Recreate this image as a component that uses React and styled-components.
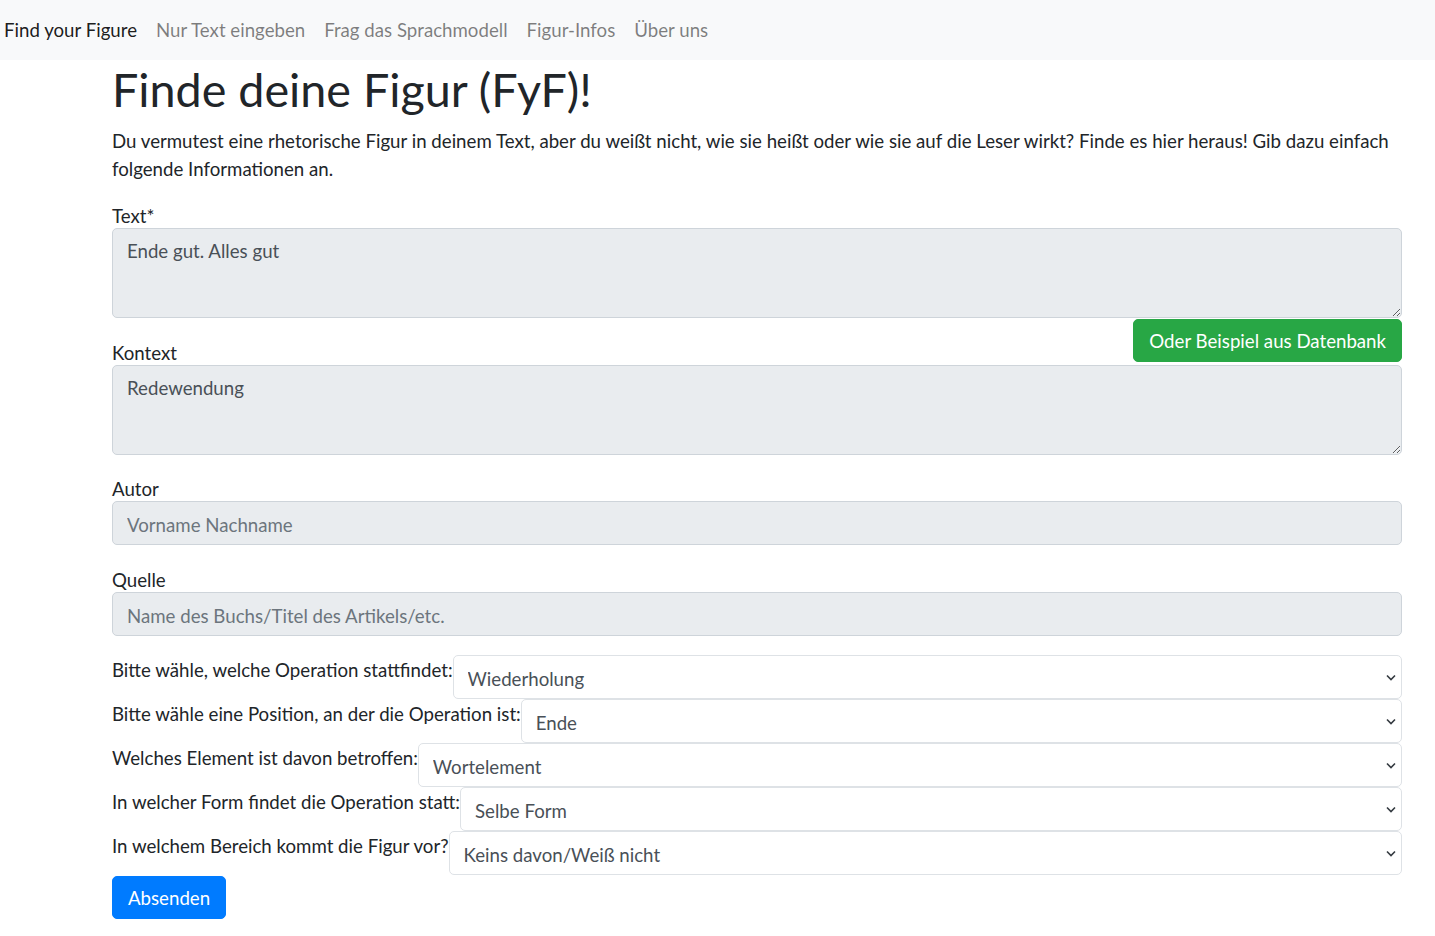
import React from "react";
import styled, { createGlobalStyle } from "styled-components";

const Global = createGlobalStyle`
  html, body { margin: 0; padding: 0; background: #fff; }
  body {
    font-family: Lato, "Liberation Sans", sans-serif;
    font-size: 18.67px;
    line-height: 1.5;
    color: #212529;
  }
  * { box-sizing: border-box; }
`;

const Navbar = styled.nav`
  height: 60px;
  background: #f8f9fa;
  display: flex;
  align-items: center;
  padding-left: 4px;
  gap: 19px;
`;

const NavLink = styled.a`
  font-size: 18.67px;
  color: ${(p) => (p.$brand ? "rgba(0,0,0,0.9)" : "rgba(0,0,0,0.5)")};
  text-decoration: none;
  cursor: pointer;
`;

const Main = styled.main`
  padding: 0 33px 40px 112px;
`;

const Title = styled.h1`
  font-size: 46.7px;
  font-weight: 400;
  line-height: 56px;
  margin: 1px 0 10px;
`;

const Intro = styled.p`
  margin: 0 0 21px;
  line-height: 28px;
`;

const Group = styled.div`
  margin-bottom: ${(p) => p.$mb || 0}px;
`;

const Label = styled.label`
  display: block;
  line-height: 24px;
`;

const LabelRow = styled.div`
  display: flex;
  justify-content: space-between;
  align-items: flex-end;
  margin-top: 1px;
`;

const Button = styled.button`
  font-family: inherit;
  font-size: 18.67px;
  line-height: 28px;
  color: #fff;
  background: ${(p) => p.$bg};
  border: 1px solid ${(p) => p.$bg};
  border-radius: 5px;
  padding: 7px 15px 6px;
  height: 43px;
  cursor: pointer;
`;

const ExampleButton = styled(Button)`
  margin-bottom: 3px;
`;

const TextArea = styled.textarea`
  display: block;
  width: 100%;
  height: ${(p) => p.$h}px;
  font-family: inherit;
  font-size: 18.67px;
  line-height: 28px;
  color: #495057;
  background: #e9ecef;
  border: 1px solid #ced4da;
  border-radius: 5px;
  padding: 8px 14px 6px;
  resize: vertical;
  outline: none;
`;

const TextInput = styled.input`
  display: block;
  width: 100%;
  height: 44px;
  font-family: inherit;
  font-size: 18.67px;
  color: #495057;
  background: #e9ecef;
  border: 1px solid #ced4da;
  border-radius: 5px;
  padding: 9px 14px 5px;
  outline: none;
  &::placeholder { color: #6c757d; }
`;

const SelectList = styled.div`
  margin-top: 19px;
  display: flex;
  flex-direction: column;
`;

const SelectRow = styled.div`
  display: flex;
  align-items: flex-start;
`;

const InlineLabel = styled.label`
  line-height: 28px;
  padding-top: 1px;
  white-space: nowrap;
`;

const SelectWrap = styled.div`
  position: relative;
  flex: 1;
`;

const Select = styled.select`
  display: block;
  width: 100%;
  height: 44px;
  appearance: none;
  font-family: inherit;
  font-size: 18.67px;
  color: #495057;
  background: #fff;
  border: 1px solid #dee2e6;
  border-radius: 5px;
  padding: 8px 40px 4px 14px;
  outline: none;
`;

const Chevron = styled.svg`
  position: absolute;
  right: 5px;
  top: 17px;
  pointer-events: none;
`;

const SubmitRow = styled.div`
  margin-top: 1px;
`;

const selects = [
  { label: "Bitte wähle, welche Operation stattfindet:", value: "Wiederholung" },
  { label: "Bitte wähle eine Position, an der die Operation ist:", value: "Ende" },
  { label: "Welches Element ist davon betroffen:", value: "Wortelement" },
  { label: "In welcher Form findet die Operation statt:", value: "Selbe Form" },
  { label: "In welchem Bereich kommt die Figur vor?", value: "Keins davon/Weiß nicht" },
];

export default function App() {
  return (
    <>
      <Global />
      <Navbar>
        <NavLink $brand>Find your Figure</NavLink>
        <NavLink>Nur Text eingeben</NavLink>
        <NavLink>Frag das Sprachmodell</NavLink>
        <NavLink>Figur-Infos</NavLink>
        <NavLink>Über uns</NavLink>
      </Navbar>
      <Main>
        <Title>Finde deine Figur (FyF)!</Title>
        <Intro>
          Du vermutest eine rhetorische Figur in deinem Text, aber du weißt nicht, wie sie heißt oder wie sie auf die
          Leser wirkt? Finde es hier heraus! Gib dazu einfach folgende Informationen an.
        </Intro>
        <Group>
          <Label>Text*</Label>
          <TextArea $h={90} defaultValue="Ende gut. Alles gut" />
        </Group>
        <Group $mb={22}>
          <LabelRow>
            <Label>Kontext</Label>
            <ExampleButton type="button" $bg="#28a745">Oder Beispiel aus Datenbank</ExampleButton>
          </LabelRow>
          <TextArea $h={90} defaultValue="Redewendung" />
        </Group>
        <Group $mb={23}>
          <Label>Autor</Label>
          <TextInput placeholder="Vorname Nachname" />
        </Group>
        <Group>
          <Label>Quelle</Label>
          <TextInput placeholder="Name des Buchs/Titel des Artikels/etc." />
        </Group>
        <SelectList>
          {selects.map((s) => (
            <SelectRow key={s.label}>
              <InlineLabel>{s.label}</InlineLabel>
              <SelectWrap>
                <Select defaultValue={s.value}>
                  <option>{s.value}</option>
                </Select>
                <Chevron width="12" height="10" viewBox="0 0 12 10">
                  <path d="M2 3.5 L6 7.5 L10 3.5" fill="none" stroke="#343a40" strokeWidth="1.6" />
                </Chevron>
              </SelectWrap>
            </SelectRow>
          ))}
        </SelectList>
        <SubmitRow>
          <Button type="button" $bg="#007bff">Absenden</Button>
        </SubmitRow>
      </Main>
    </>
  );
}
